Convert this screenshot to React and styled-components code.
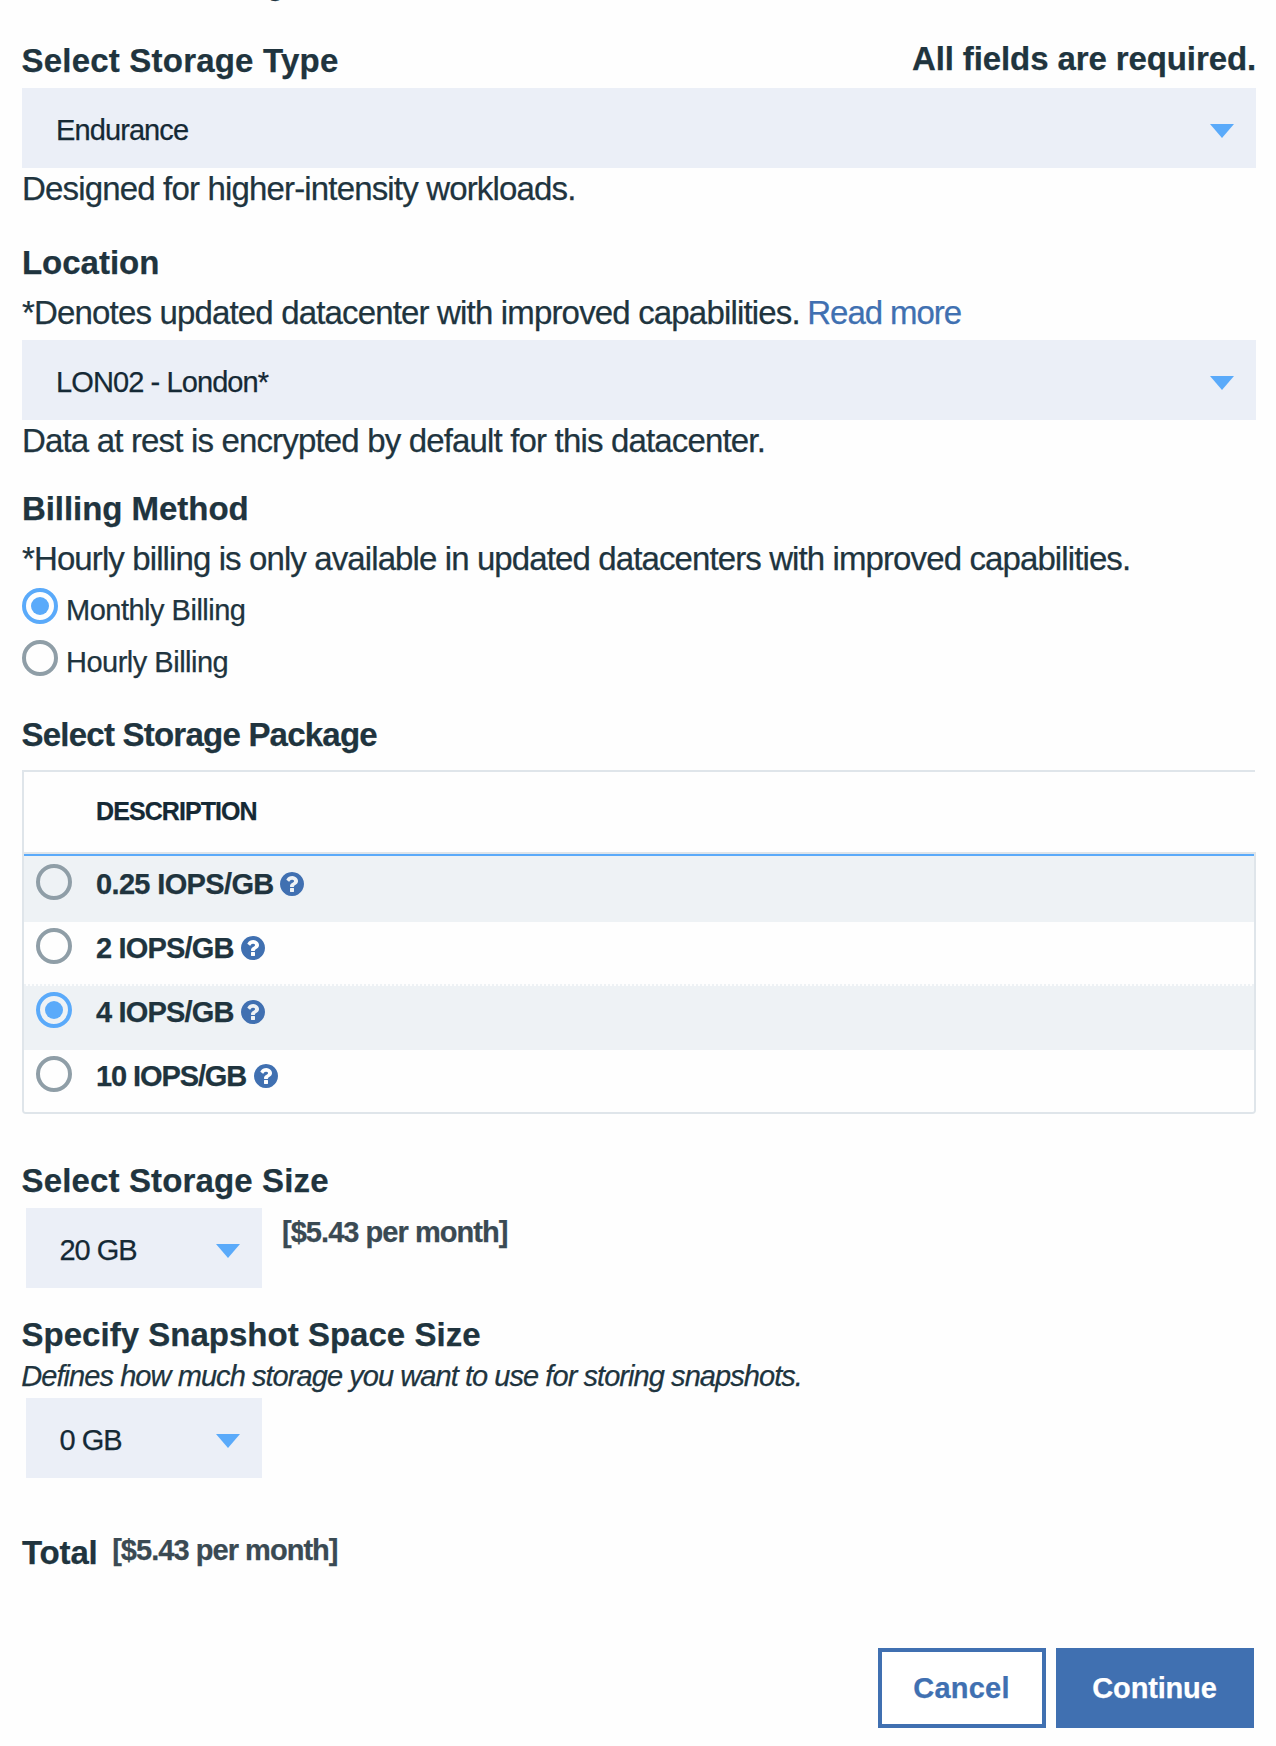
import React, { useState } from "react";
import styled, { createGlobalStyle } from "styled-components";

const color = {
  page: "#fefefe",
  text: "#20343e",
  strong: "#152935",
  price: "#3a4a53",
  brand: "#4070b1",
  accent: "#5aaafa",
  field: "#ebeff7",
  stripe: "#eef2f5",
  line: "#dfe5ea",
  ring: "#8f9ea7",
};

const GlobalStyle = createGlobalStyle`
  * { box-sizing: border-box; }
  body {
    margin: 0;
    background: ${color.page};
    color: ${color.text};
    font-family: "Liberation Sans", Arial, Helvetica, sans-serif;
    -webkit-text-stroke: 0.25px currentColor;
  }
`;

const Page = styled.main`
  width: 1276px;
  height: 1746px;
  padding: 0 20px 0 22px;
  overflow: hidden;
  white-space: nowrap;
`;

const PageTitle = styled.h1`
  margin: -35px 0 0;
  font-size: 29px;
  line-height: 40px;
  letter-spacing: -0.2px;
`;

const HeadingRow = styled.header`
  display: flex;
  justify-content: space-between;
  margin-top: 35px;
`;

const Heading = styled.h2`
  margin: ${(p) => p.$top || 0}px 0 0;
  font-size: 33px;
  line-height: 41px;
  font-weight: 700;
  letter-spacing: ${(p) => p.$tracking || 0}px;
  text-indent: ${(p) => p.$indent || -0.5}px;
`;

const RequiredNote = styled.strong`
  margin: -2px 0 0 0;
  font-size: 33px;
  line-height: 41px;
  letter-spacing: -0.106px;
`;

const Copy = styled.p`
  margin: ${(p) => p.$top || 0}px 0 0;
  font-size: 33px;
  line-height: 41px;
  letter-spacing: ${(p) => p.$tracking || -0.835}px;
  text-indent: ${(p) => p.$indent || 0}px;
`;

const Link = styled.a`
  margin-left: -0.8px;
  color: ${color.brand};
  letter-spacing: -1.05px;
  text-decoration: none;
`;

const Hint = styled.p`
  margin: 1px 0 0;
  font-size: 29px;
  line-height: 40px;
  font-style: italic;
  letter-spacing: -0.94px;
  text-indent: -0.7px;
`;

const Dropdown = styled.button`
  display: flex;
  align-items: center;
  justify-content: space-between;
  width: ${(p) => (p.$compact ? "236px" : "100%")};
  height: 80px;
  margin: ${(p) => p.$top || 0}px 0 0 ${(p) => (p.$compact ? 4 : 0)}px;
  padding: 0 22px 0 ${(p) => (p.$compact ? 33.5 : 34)}px;
  border: 0;
  background: ${color.field};
  color: ${color.strong};
  font: 29px/40px "Liberation Sans", Arial, sans-serif;
  letter-spacing: ${(p) => p.$tracking}px;

  span {
    margin-top: 4px;
  }
`;

const Caret = styled.svg`
  display: block;
  width: 24px;
  height: 14px;
  margin-top: 5px;
  fill: ${color.accent};
`;

const SizeRow = styled.div`
  display: flex;
  align-items: flex-start;
  margin-top: 7px;
`;

const Price = styled.strong`
  margin: ${(p) => p.$top}px 0 0 ${(p) => p.$left}px;
  color: ${color.price};
  font-size: 29px;
  line-height: 40px;
  letter-spacing: -0.96px;
`;

const RadioLine = styled.label`
  display: flex;
  align-items: flex-start;
  height: 52px;
`;

const RadioGroup = styled.div`
  margin-top: 9px;
`;

const RadioText = styled.span`
  margin: 2px 0 0 8px;
  font-size: 29px;
  line-height: 40px;
  letter-spacing: -0.5px;
`;

const RadioMark = styled.input.attrs({ type: "radio" })`
  appearance: none;
  display: grid;
  place-items: center;
  flex: none;
  width: 36px;
  height: 36px;
  margin: 0;
  border: 4px solid ${color.ring};
  border-radius: 50%;

  &:checked {
    border-color: ${color.accent};
  }
  &:checked::before {
    content: "";
    width: 18px;
    height: 18px;
    border-radius: 50%;
    background: ${color.accent};
  }
`;

const Table = styled.section`
  margin-top: 15px;
`;

const TableHead = styled.div`
  height: 82px;
  margin-right: 1px;
  padding: 19px 0 0 72px;
  border: solid ${color.line};
  border-width: 2px 0 0 2px;
  color: ${color.strong};
  font-size: 25px;
  line-height: 40px;
  font-weight: 700;
  letter-spacing: -0.92px;
`;

const TableBody = styled.div`
  height: 262px;
  overflow: hidden;
  border: 2px solid ${color.line};
  border-radius: 0 0 4px 4px;
`;

const TableRow = styled.label`
  display: flex;
  align-items: flex-start;
  height: 64px;
  padding: 6px 12px 0;
  border-bottom: 2px dotted ${color.stripe};
  background: ${color.page};

  &:nth-child(odd) {
    background: ${color.stripe};
  }
  &:first-child {
    height: 68px;
    padding-top: 8px;
    border-top: 2px solid ${color.accent};
  }
`;

const PackageName = styled.strong`
  margin-left: 24px;
  font-size: 29px;
  line-height: 40px;
  letter-spacing: ${(p) => p.$tracking}px;
`;

const HelpIcon = styled.svg`
  display: block;
  width: 24px;
  height: 24px;
  margin: 8px 0 0 ${(p) => p.$gap}px;
  fill: ${color.brand};
`;

const TotalRow = styled.div`
  display: flex;
  align-items: flex-start;
  margin-top: 54px;
`;

const Actions = styled.footer`
  display: flex;
  justify-content: flex-end;
  gap: 10px;
  margin: 75px 2px 0 0;
`;

const Button = styled.button`
  width: ${(p) => (p.$primary ? 198 : 168)}px;
  height: 80px;
  padding: 0 1px 0 0;
  border: 4px solid ${color.brand};
  background: ${(p) => (p.$primary ? color.brand : "#fff")};
  color: ${(p) => (p.$primary ? "#fff" : color.brand)};
  font: 700 29px/40px "Liberation Sans", Arial, sans-serif;
  letter-spacing: ${(p) => (p.$primary ? -0.17 : 0.25)}px;
`;

const packages = [
  { name: "0.25 IOPS/GB", tracking: -0.647, gap: 6.2 },
  { name: "2 IOPS/GB", tracking: -0.812, gap: 7 },
  { name: "4 IOPS/GB", tracking: -0.812, gap: 7 },
  { name: "10 IOPS/GB", tracking: -1.1, gap: 7.5 },
];

function Select({ value, ...rest }) {
  return (
    <Dropdown type="button" {...rest}>
      <span>{value}</span>
      <Caret viewBox="0 0 24 14" aria-hidden="true">
        <path d="M0 0H24L12 14Z" />
      </Caret>
    </Dropdown>
  );
}

function Help({ gap }) {
  return (
    <HelpIcon $gap={gap} viewBox="128 128 1536 1536" aria-hidden="true">
      <path d="M1024 1376v-192q0-14-9-23t-23-9h-192q-14 0-23 9t-9 23v192q0 14 9 23t23 9h192q14 0 23-9t9-23zM1280 704q0-88-55.5-163t-138.5-116-170-41q-243 0-371 213-15 24 8 42l132 100q7 6 19 6 16 0 25-12 53-68 86-92 34-24 86-24 48 0 85.5 26t37.5 59q0 38-20 61t-68 45q-63 28-115.5 86.5t-52.5 125.5v36q0 14 9 23t23 9h192q14 0 23-9t9-23q0-19 21.5-49.5t54.5-49.5q32-18 49-28.5t46-35 44.5-48 28-60.5 12.5-81zM1664 896q0 209-103 385.5t-279.5 279.5-385.5 103-385.5-103-279.5-279.5-103-385.5 103-385.5 279.5-279.5 385.5-103 385.5 103 279.5 279.5 103 385.5z" />
    </HelpIcon>
  );
}

export default function App() {
  const [billing, setBilling] = useState("Monthly Billing");
  const [tier, setTier] = useState("4 IOPS/GB");

  return (
    <>
      <GlobalStyle />
      <Page>
        <PageTitle>Order Block Storage</PageTitle>

        <HeadingRow>
          <Heading $tracking={0.208}>Select Storage Type</Heading>
          <RequiredNote>All fields are required.</RequiredNote>
        </HeadingRow>
        <Select value="Endurance" $top={7} $tracking={-0.9} />
        <Copy>Designed for higher-intensity workloads.</Copy>

        <Heading $top={33} $indent={-0.1}>Location</Heading>
        <Copy $top={9}>
          *Denotes updated datacenter with improved capabilities.{" "}
          <Link>Read more</Link>
        </Copy>
        <Select value="LON02 - London*" $top={7} $tracking={-0.9} />
        <Copy>Data at rest is encrypted by default for this datacenter.</Copy>

        <Heading $top={27} $indent={-0.1} $tracking={-0.04}>Billing Method</Heading>
        <Copy $top={9} $tracking={-0.892}>
          *Hourly billing is only available in updated datacenters with improved
          capabilities.
        </Copy>
        <RadioGroup>
          {["Monthly Billing", "Hourly Billing"].map((label) => (
            <RadioLine key={label}>
              <RadioMark
                name="billing"
                checked={billing === label}
                onChange={() => setBilling(label)}
              />
              <RadioText>{label}</RadioText>
            </RadioLine>
          ))}
        </RadioGroup>

        <Heading $top={22} $tracking={-0.77}>Select Storage Package</Heading>
        <Table>
          <TableHead>DESCRIPTION</TableHead>
          <TableBody>
            {packages.map(({ name, tracking, gap }) => (
              <TableRow key={name}>
                <RadioMark
                  name="package"
                  checked={tier === name}
                  onChange={() => setTier(name)}
                />
                <PackageName $tracking={tracking}>{name}</PackageName>
                <Help gap={gap} />
              </TableRow>
            ))}
          </TableBody>
        </Table>

        <Heading $top={46} $tracking={0.14}>Select Storage Size</Heading>
        <SizeRow>
          <Select value="20 GB" $compact $tracking={-1.018} />
          <Price $top={4} $left={20}>[$5.43 per month]</Price>
        </SizeRow>

        <Heading $top={26} $tracking={0.02}>Specify Snapshot Space Size</Heading>
        <Hint>Defines how much storage you want to use for storing snapshots.</Hint>
        <Select value="0 GB" $compact $top={2} $tracking={-1.014} />

        <TotalRow>
          <Heading $tracking={-0.127} $indent={-0.1}>Total</Heading>
          <Price $top={-2} $left={14.5}>[$5.43 per month]</Price>
        </TotalRow>

        <Actions>
          <Button type="button">Cancel</Button>
          <Button type="button" $primary>Continue</Button>
        </Actions>
      </Page>
    </>
  );
}
